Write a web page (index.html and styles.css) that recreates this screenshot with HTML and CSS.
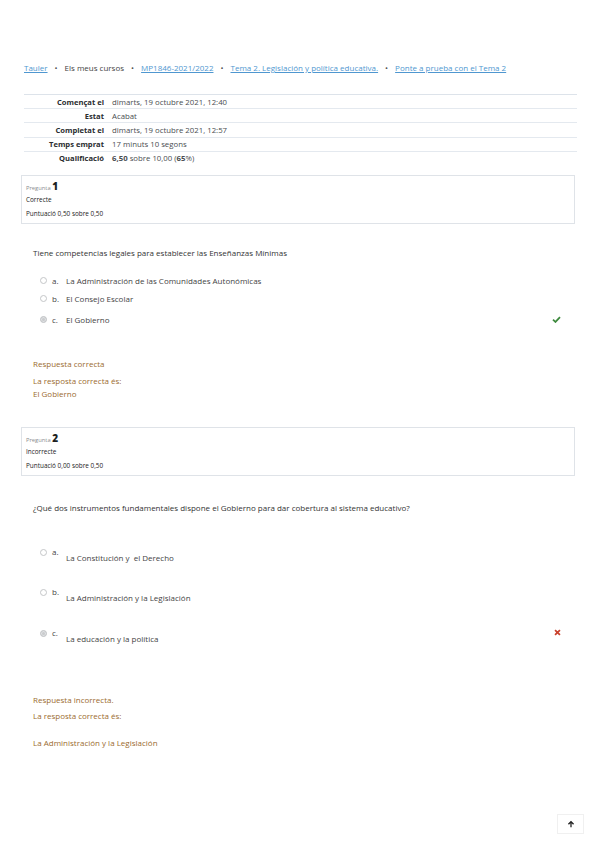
FILE: index.html
```html
<!DOCTYPE html>
<html lang="ca">
<head>
<meta charset="utf-8">
<title>Ponte a prueba con el Tema 2</title>
<link rel="stylesheet" href="styles.css">
</head>
<body>
<div class="page">
  <nav class="breadcrumb">
    <a href="#">Tauler</a><span class="sep">•</span><span>Els meus cursos</span><span class="sep">•</span><a href="#">MP1846-2021/2022</a><span class="sep">•</span><a href="#">Tema 2. Legislación y política educativa.</a><span class="sep">•</span><a href="#">Ponte a prueba con el Tema 2</a>
  </nav>

  <table class="summary">
    <tr><th>Començat el</th><td>dimarts, 19 octubre 2021, 12:40</td></tr>
    <tr><th>Estat</th><td>Acabat</td></tr>
    <tr><th>Completat el</th><td>dimarts, 19 octubre 2021, 12:57</td></tr>
    <tr><th>Temps emprat</th><td>17 minuts 10 segons</td></tr>
    <tr class="last"><th>Qualificació</th><td><b>6,50</b> sobre 10,00 (<b>65</b>%)</td></tr>
  </table>

  <div class="qinfo q1">
    <div class="qno"><span class="qlabel">Pregunta</span> <b>1</b></div>
    <div class="qstate">Correcte</div>
    <div class="qgrade">Puntuació 0,50 sobre 0,50</div>
  </div>

  <div class="qtext q1text">Tiene competencias legales para establecer las Enseñanzas Mínimas</div>

  <div class="answers a1">
    <div class="opt"><span class="radio"></span><span class="letter">a.</span><span>La Administración de las Comunidades Autonómicas</span></div>
    <div class="opt"><span class="radio"></span><span class="letter">b.</span><span>El Consejo Escolar</span></div>
    <div class="opt opt-c"><span class="radio checked"></span><span class="letter">c.</span><span class="otext">El Gobierno</span>
      <svg class="mark" viewBox="0 0 10 8" width="9" height="7"><path d="M1 4.2 L3.8 6.8 L9 1.2" fill="none" stroke="#3e8a3e" stroke-width="2"/></svg>
    </div>
  </div>

  <div class="feedback fb1">
    <div class="fb-state">Respuesta correcta</div>
    <div class="fb-right">La resposta correcta és:</div>
    <div class="fb-ans">El Gobierno</div>
  </div>

  <div class="qinfo q2">
    <div class="qno"><span class="qlabel">Pregunta</span> <b>2</b></div>
    <div class="qstate">Incorrecte</div>
    <div class="qgrade">Puntuació 0,00 sobre 0,50</div>
  </div>

  <div class="qtext q2text">¿Qué dos instrumentos fundamentales dispone el Gobierno para dar cobertura al sistema educativo?</div>

  <div class="answers a2">
    <div class="opt2"><span class="radio"></span><span class="letter2">a.</span><span class="otext2">La Constitución y&nbsp; el Derecho</span></div>
    <div class="opt2"><span class="radio"></span><span class="letter2">b.</span><span class="otext2">La Administración y la Legislación</span></div>
    <div class="opt2"><span class="radio checked"></span><span class="letter2">c.</span><span class="otext2">La educación y la política</span>
      <svg class="mark2" viewBox="0 0 8 8" width="7" height="7"><path d="M1.2 1.2 L6.8 6.8 M6.8 1.2 L1.2 6.8" fill="none" stroke="#c9402c" stroke-width="2"/></svg>
    </div>
  </div>

  <div class="feedback fb2">
    <div class="fb-state">Respuesta incorrecta.</div>
    <div class="fb-right">La resposta correcta és:</div>
    <div class="fb-ans">La Administración y la Legislación</div>
  </div>
</div>
<a class="totop" href="#"><svg viewBox="0 0 10 10" width="8" height="8"><path d="M5 1 L1.2 4.8 L2.4 6 L4.2 4.2 L4.2 9 L5.8 9 L5.8 4.2 L7.6 6 L8.8 4.8 Z" fill="#222"/></svg></a>
</body>
</html>
```

FILE: styles.css
```css
html, body {
  margin: 0;
  padding: 0;
  background: #fff;
}
body {
  font-family: "Open Sans", "Noto Sans", sans-serif;
  color: #373a3c;
  font-size: 8px;
  line-height: 10px;
  width: 599px;
  height: 848px;
  position: relative;
  overflow: hidden;
}
.page {
  padding: 0 22px 0 24px;
}
a { color: #4f97d0; }

.breadcrumb {
  margin-top: 63px;
  height: 10px;
  font-size: 8px;
  line-height: 10px;
  white-space: nowrap;
  color: #444;
}
.breadcrumb .sep {
  margin: 0 7px;
  color: #555;
}

.summary {
  margin-top: 21px;
  width: 553px;
  border-collapse: collapse;
}
.summary th, .summary td {
  border-top: 1px solid #e4e9ef;
  height: 13.2px;
  padding: 0;
  line-height: 10px;
}
.summary th {
  width: 80px;
  text-align: right;
  font-weight: 700;
  font-size: 7.6px;
  padding-right: 8px;
  color: #2a2d30;
}
.summary td { color: #4a4d50; font-size: 7.8px; }
.summary tr:first-child th, .summary tr:first-child td { border-top-color: #dde3ea; }

.qinfo {
  margin-left: -3px;
  width: 554px;
  border: 1px solid #dfe3e8;
  box-sizing: border-box;
  padding: 4px 4px 0 4px;
  height: 49px;
  font-size: 6.4px;
  line-height: 10px;
  color: #222;
}
.q1 { margin-top: 10px; }
.q2 { margin-top: 28px; }
.qno { height: 12px; line-height: 12px; }
.qlabel { font-size: 5.8px; color: #8a8d90; }
.qno b { font-size: 10px; font-weight: 800; color: #1d1f21; }
.qstate { margin-top: 3px; height: 14px; }
.qgrade { height: 10px; }

.qtext {
  margin-left: 9px;
  color: #333;
  height: 10px;
}
.q1text { margin-top: 24px; }
.q2text { margin-top: 27px; }

.answers { margin-left: 16px; }
.a1 { margin-top: 14px; }
.opt {
  display: flex;
  align-items: center;
  height: 18px;
  color: #444;
}
.opt-c { height: 24px; }
.radio {
  width: 5px;
  height: 5px;
  border: 1px solid #c4c6c8;
  border-radius: 50%;
  margin-right: 5px;
  flex: none;
}
.radio.checked {
  background: #c9cbcd;
  box-shadow: inset 0 0 0 1px #e0e2e4;
}
.letter { width: 14px; }
.mark { margin-left: auto; margin-right: 16px; }

.feedback {
  margin-left: 9px;
  color: #9b6b2f;
}
.feedback div { line-height: 10px; }
.fb1 { margin-top: 27px; height: 40px; }
.fb-state { height: 17px; }
.fb1 .fb-right { height: 13px; }

.a2 { margin-top: 35px; }
.opt2 {
  display: flex;
  align-items: flex-start;
  height: 40.5px;
  color: #444;
}
.opt2 .radio { margin-top: 1px; }
.letter2 { width: 14px; line-height: 7px; }
.otext2 { margin-top: 5px; line-height: 10px; }
.mark2 { margin-left: auto; margin-right: 16px; margin-top: 0; }

.fb2 { margin-top: 26px; }
.fb2 .fb-state { height: 16px; }
.fb2 .fb-right { height: 27px; }

.totop {
  position: absolute;
  left: 557px;
  top: 814px;
  width: 27px;
  height: 20px;
  border: 1px solid #f0f0f0;
  box-sizing: border-box;
  display: flex;
  align-items: center;
  justify-content: center;
}
```
